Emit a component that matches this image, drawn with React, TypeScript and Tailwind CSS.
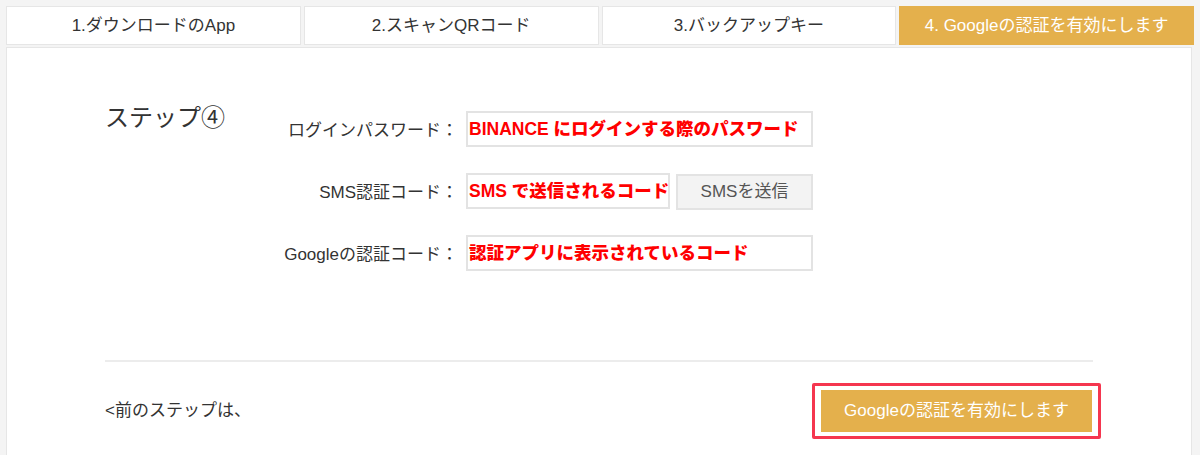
const font = "font-['Liberation_Sans','Noto_Sans_CJK_JP',sans-serif]"

const tabs = ["1.ダウンロードのApp", "2.スキャンQRコード", "3.バックアップキー", "4. Googleの認証を有効にします"]

function Field({ label, value, width = "w-[347px]" }: { label: string; value: string; width?: string }) {
    return (
        <div className="flex items-center">
            <div className="w-[183px] pt-[3px] text-right text-[17px] text-[#333] whitespace-nowrap">{label}：</div>
            <div className={`ml-[8px] h-[36px] ${width} border-2 border-[#e3e3e3] bg-white flex items-center px-[1px] text-[17.5px] font-black text-[#ff0000] whitespace-nowrap overflow-hidden`}>{value}</div>
        </div>
    )
}

export default function App() {
    return (
        <div className={`${font} w-[1200px] h-[455px] bg-[#f4f4f4] overflow-hidden`}>
            <div className="flex gap-[3px] px-[6px] pt-[6px]">
                {tabs.map((t, i) => (
                    <div
                        key={t}
                        className={`flex-1 h-[39px] flex items-center justify-center text-[17px] border ${i === 3 ? "bg-[#e4b04c] border-[#e4b04c] text-white" : "bg-white border-[#e6e6e6] text-[#333]"}`}
                    >
                        {t}
                    </div>
                ))}
            </div>
            <div className="mx-[6px] mt-[2px] w-[1186px] h-[420px] border border-[#e6e6e6] bg-white pl-[98px] pr-[98px] pt-[55px]">
                <div className="flex">
                    <div className="w-[170px] text-[24px] text-[#333] leading-[30px]">ステップ④</div>
                    <div className="flex flex-col gap-[26px] pt-[8px]">
                        <Field label="ログインパスワード" value="BINANCE にログインする際のパスワード" />
                        <div className="flex items-center h-[36px]">
                            <Field label="SMS認証コード" value="SMS で送信されるコード" width="w-[204px]" />
                            <button className="ml-[6px] translate-y-[1px] h-[36px] w-[137px] border-2 border-[#e3e3e3] bg-[#f3f3f3] text-[17px] text-[#555]">SMSを送信</button>
                        </div>
                        <Field label="Googleの認証コード" value="認証アプリに表示されているコード" />
                    </div>
                </div>
                <div className="mt-[89px] h-[2px] bg-[#ececec]"></div>
                <div className="flex items-center justify-between mt-[21px]">
                    <span className="text-[17px] text-[#333]">&lt;前のステップは、</span>
                    <div className="mr-[-8px] border-[3px] border-[#f5364f] px-[6px] py-[4px] rounded-[2px]">
                        <button className="h-[42px] w-[271px] bg-[#e4b04c] text-white text-[17px]">Googleの認証を有効にします</button>
                    </div>
                </div>
            </div>
        </div>
    )
}
